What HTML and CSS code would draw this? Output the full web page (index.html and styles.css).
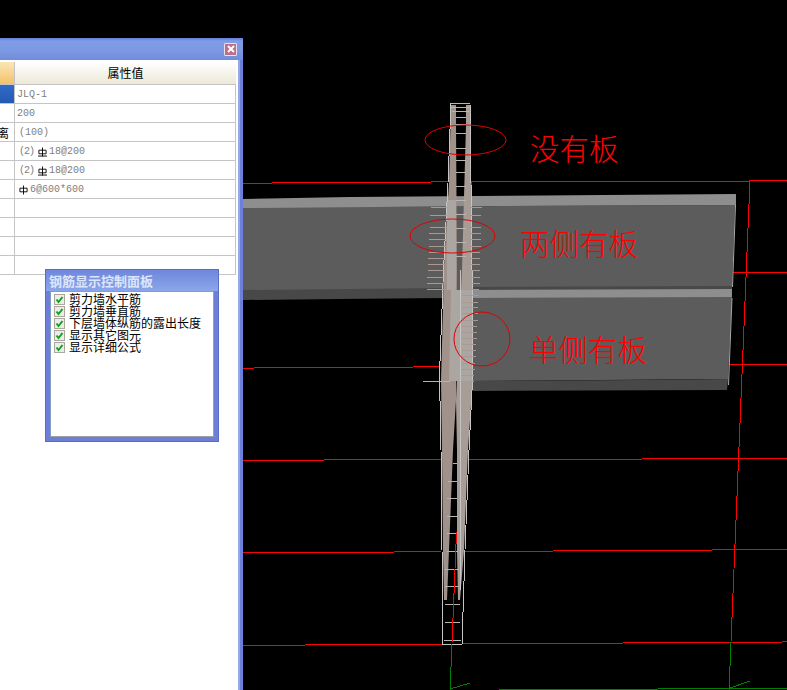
FILE: index.html
```html
<!DOCTYPE html>
<html lang="zh">
<head>
<meta charset="utf-8">
<title>钢筋显示控制面板</title>
<link rel="stylesheet" href="styles.css">
</head>
<body>
<div class="stage">
  <section class="window">
    <header class="titlebar">
      <button class="close" type="button" aria-label="关闭">
        <svg class="close-x" viewBox="0 0 8 8"><path d="M1 1 7 7M7 1 1 7"/></svg>
      </button>
    </header>
    <div class="client">
      <div class="props">
        <div class="cell key head"></div><div class="cell val head">属性值</div>
        <div class="cell key selected"></div><div class="cell val">JLQ-1</div>
        <div class="cell key"></div><div class="cell val">200</div>
        <div class="cell key"><span class="clip">离</span></div><div class="cell val inset">(100)</div>
        <div class="cell key"></div><div class="cell val inset"><span class="paren">(2)</span><svg class="bar" viewBox="0 0 10 10"><path d="M5 0V10M1 3H9V7H1ZM0 9.500H10"/></svg>18@200</div>
        <div class="cell key"></div><div class="cell val inset"><span class="paren">(2)</span><svg class="bar" viewBox="0 0 10 10"><path d="M5 0V10M1 3H9V7H1ZM0 9.500H10"/></svg>18@200</div>
        <div class="cell key"></div><div class="cell val inset"><svg class="bar first" viewBox="0 0 10 10"><path d="M5 0V10M1 3H9V7H1Z"/></svg>6@600*600</div>
        <div class="cell key"></div><div class="cell val"></div>
        <div class="cell key"></div><div class="cell val"></div>
        <div class="cell key"></div><div class="cell val"></div>
        <div class="cell key"></div><div class="cell val"></div>
      </div>
    </div>
    <aside class="panel">
      <h2 class="panel-title">钢筋显示控制面板</h2>
      <ul class="panel-list">
        <li class="option"><svg class="check" viewBox="0 0 9 9"><path d="M1.500 4.500 3.500 7 7.500 2"/></svg>剪力墙水平筋</li>
        <li class="option"><svg class="check" viewBox="0 0 9 9"><path d="M1.500 4.500 3.500 7 7.500 2"/></svg>剪力墙垂直筋</li>
        <li class="option"><svg class="check" viewBox="0 0 9 9"><path d="M1.500 4.500 3.500 7 7.500 2"/></svg>下层墙体纵筋的露出长度</li>
        <li class="option"><svg class="check" viewBox="0 0 9 9"><path d="M1.500 4.500 3.500 7 7.500 2"/></svg>显示其它图元</li>
        <li class="option"><svg class="check" viewBox="0 0 9 9"><path d="M1.500 4.500 3.500 7 7.500 2"/></svg>显示详细公式</li>
      </ul>
    </aside>
  </section>

  <svg class="scene" viewBox="243 0 544 690" width="544" height="690">
    <!-- grid lines -->
    <path class="red" d="M243 183H272M272 182H431M431 181.500H448M470 181.500H660M660 181H750M750 180H787M733 272H787M729 364H787
      M243 368H254M254 367H413M413 366H440M243 460H324M324 459H441M468 459H642M642 458H787
      M243 552H394M394 551H441M464 551H553M553 550H712M712 549H787M243 645H305M305 644H443M463 643H623M623 642H782M782 641H787"/>
    <path class="red" d="M750 180 731 642"/>
    <path class="red" d="M471.500 182V195"/>

    <!-- slabs -->
    <polygon class="slab-body" points="243,207 735,205 732,288 470,290 445,298 243,290"/>
    <polygon class="slab-top" points="243,199 350,197 736,194 736,205 500,206 243,208"/>
    <polygon class="slab-low" points="243,290 445,288 445,298 340,299 243,300"/>
    <polygon class="slab-low" points="470,287 732,286 732,290 470,291"/>
    <polygon class="slab-body" points="470,297 732,297 728,379 470,381"/>
    <polygon class="slab-top" points="470,290 732,289 732,297 470,298"/>
    <polygon class="slab-low" points="470,381 640,380 728,379 727,390 470,391"/>
    <path class="slab-rim" d="M735.500 205 732.500 287M732 298 728.500 385"/>

    <!-- wall -->
    <polygon class="wall" points="451,105 456,105 456,125 457,270 456,400 453,450 449,550 447,600 444,600 443,550 442,450 441,380 444,270 449,183"/>
    <polygon class="wall wall-r" points="466,105 470,105 471,183 472,270 472,390 468,450 464,550 460,600 458,600 457,550 457,450 456,400 462,270 466,125"/>
    <polygon class="wall-light" points="451,290 472,290 472,381 449,381"/>
    <rect class="wall-light" x="447" y="200" width="9" height="90"/>
    <path class="wire" d="M451 103H470M451 107H470M452 111H469M456 117H466M456 124H466M456 133H466M456 148H466M456 160H466M456 172H466M456 186H466M456 200H466M456 214H466M456 228H466M456 242H466M456 256H466
      M453 463H457M448 481H457M447 498H457M447 516H458M447 533H458M447 551H458M445 569H459M445 586H459M445 604H460M445 622H460M444 640H461M423 381H450"/>
    <path class="edge" d="M451 103 448 183 443.500 270 439.500 375 441 450 442 550 443 644H462L465 550 469 450 472 390 472 270 471 183 470 103M460 270V590"/>
    <path class="stick" d="M431 207H447M430 215H447M430 227H447M429 233H447M429 239H447M429 246H447M429 252H446M428 258H446M428 264H445M428 270H445M427 277H445M427 283H445M427 289H445
      M465 207H482M465 215H481M465 227H481M465 233H481M465 239H481M465 246H481M465 252H480M465 258H480M465 264H480M465 270H480
      M462 277H480M462 283H480M462 289H479M462 295H479M462 302H478M462 307H478M462 313H478M462 320H478M462 326H477M462 332H477M462 338H477M462 344H476M462 350H476M462 356H476M462 363H475M462 369H475M462 375H474M462 381H474"/>
    <path class="red" d="M456.500 532 452 643"/>

    <!-- axes -->
    <path class="green" d="M452 644 450 690M450 689 470 683M731 642 729 690M730 688 750 681M499 689H658M658 688.500H787"/>

    <!-- notes -->
    <ellipse class="ring" cx="465.500" cy="140" rx="40.500" ry="15"/>
    <ellipse class="ring" cx="452.500" cy="236" rx="42.500" ry="17"/>
    <ellipse class="ring" cx="482" cy="339" rx="28" ry="27"/>
    <text class="note" x="530" y="160">没有板</text>
    <text class="note" x="520" y="255">两侧有板</text>
    <text class="note" x="529" y="361">单侧有板</text>
  </svg>
</div>
</body>
</html>
```

FILE: styles.css
```css
* { box-sizing: border-box; }

html, body {
  margin: 0;
  padding: 0;
  background: #000;
  overflow: hidden;
}

.stage {
  display: flex;
  width: 787px;
  height: 690px;
  font-family: "Noto Sans CJK SC", "Liberation Sans", sans-serif;
  font-size: 12px;
}

/* property window */
.window {
  position: relative;
  display: flex;
  flex-direction: column;
  flex: none;
  width: 243px;
  height: 652px;
  margin-top: 38px;
}

.titlebar {
  display: flex;
  align-items: center;
  justify-content: flex-end;
  flex: none;
  height: 22px;
  padding-right: 6px;
  background: linear-gradient(#5f7dd8 0, #7f9ce4 3px, #7d98e2 60%, #6f8cdc);
}

.close {
  display: flex;
  align-items: center;
  justify-content: center;
  width: 13px;
  height: 13px;
  padding: 0;
  border: 1px solid #e8e0ec;
  border-radius: 1px;
  background: #bd6f88;
}

.close-x {
  width: 8px;
  height: 8px;
  fill: none;
  stroke: #fff;
  stroke-width: 2;
}

.client {
  flex: 1;
  padding-top: 2px;
  background: #fff;
  border-right: 3px solid #6c7fdc;
  box-shadow: inset -2px 0 0 #98a8e4;
}

.props {
  display: grid;
  grid-template-columns: 15px 221px;
  grid-template-rows: 23px repeat(10, 19px);
  width: 236px;
  border-right: 1px solid #c4c4c4;
}

.cell {
  display: flex;
  align-items: center;
  overflow: hidden;
  border-bottom: 1px solid #c4c4c4;
  font-family: "Liberation Mono", "Noto Sans CJK SC", monospace;
  font-size: 10px;
  color: #808080;
  white-space: nowrap;
}

.key {
  justify-content: flex-end;
  border-right: 1px solid #c4c4c4;
  color: #000;
}

.clip {
  flex: none;
  margin-right: 5px;
  font-family: "Noto Sans CJK SC", sans-serif;
  font-size: 12px;
}

.val { padding: 1px 0 0 2px; }
.inset { padding-left: 4px; }
.paren { letter-spacing: -1px; }

.key.head {
  background: linear-gradient(#fbe6b8, #f2c268);
}

.val.head {
  justify-content: center;
  padding: 0 0 2px;
  background: linear-gradient(#fff, #ece9d8);
  font-family: "Noto Sans CJK SC", sans-serif;
  font-size: 12px;
  color: #000;
}

.key.selected { background: linear-gradient(#2f6bc8, #2459b4); }

.bar {
  flex: none;
  width: 9px;
  height: 10px;
  margin: 0 2px 0 4px;
  fill: none;
  stroke: #000;
  stroke-width: 1;
}

.bar.first { margin-left: 0; }

/* floating panel */
.panel {
  position: absolute;
  left: 45px;
  top: 231px;
  display: flex;
  flex-direction: column;
  width: 174px;
  height: 173px;
  padding: 0 4px 4px;
  background: #6c7ed8;
  border: 1px solid #5a6cc8;
}

.panel-title {
  flex: none;
  height: 21px;
  margin: 0 -4px;
  padding: 3px 0 0 3px;
  background: linear-gradient(#6f87dc, #8ba6ea);
  font-size: 13px;
  font-weight: 700;
  line-height: 16px;
  color: #dce6fb;
}

.panel-list {
  flex: 1;
  margin: 0;
  padding: 1px 0 0 3px;
  list-style: none;
  background: #fff;
  border: 1px solid #7f9fc4;
  border-right-color: #9aa3a0;
  border-bottom-color: #9aa3a0;
}

.option {
  display: flex;
  align-items: center;
  gap: 4px;
  height: 12px;
  font-size: 12px;
  line-height: 12px;
  color: #000;
  white-space: nowrap;
}

.check {
  flex: none;
  width: 11px;
  height: 11px;
  background: #ececec;
  border: 1px solid #aaa89c;
  fill: none;
  stroke: #14a01e;
  stroke-width: 2;
}

/* 3D view */
.scene {
  display: block;
  flex: none;
  background: #000;
}

.red, .green, .wire, .edge, .stick {
  fill: none;
  stroke-width: 1;
  shape-rendering: crispEdges;
}

.red { stroke: #ff0000; }
.green { stroke: #008000; }
.wire { stroke: #b8b4b0; }
.edge { stroke: #c4c4c4; }
.stick { stroke: #a89a92; }

.slab-body { fill: #5c5c5c; }
.slab-top { fill: #8e8e8e; }
.slab-low { fill: #484848; }
.slab-rim { fill: none; stroke: #a8a8a8; }

.wall { fill: #a0928a; }
.wall-r { fill: #a89c96; }
.wall-light { fill: #aca6a2; }

.ring {
  fill: none;
  stroke: #e00000;
  stroke-width: 1;
}

.note {
  fill: #ff0000;
  font-family: "Noto Sans CJK SC", sans-serif;
  font-size: 29.500px;
  font-weight: 300;
}
```
